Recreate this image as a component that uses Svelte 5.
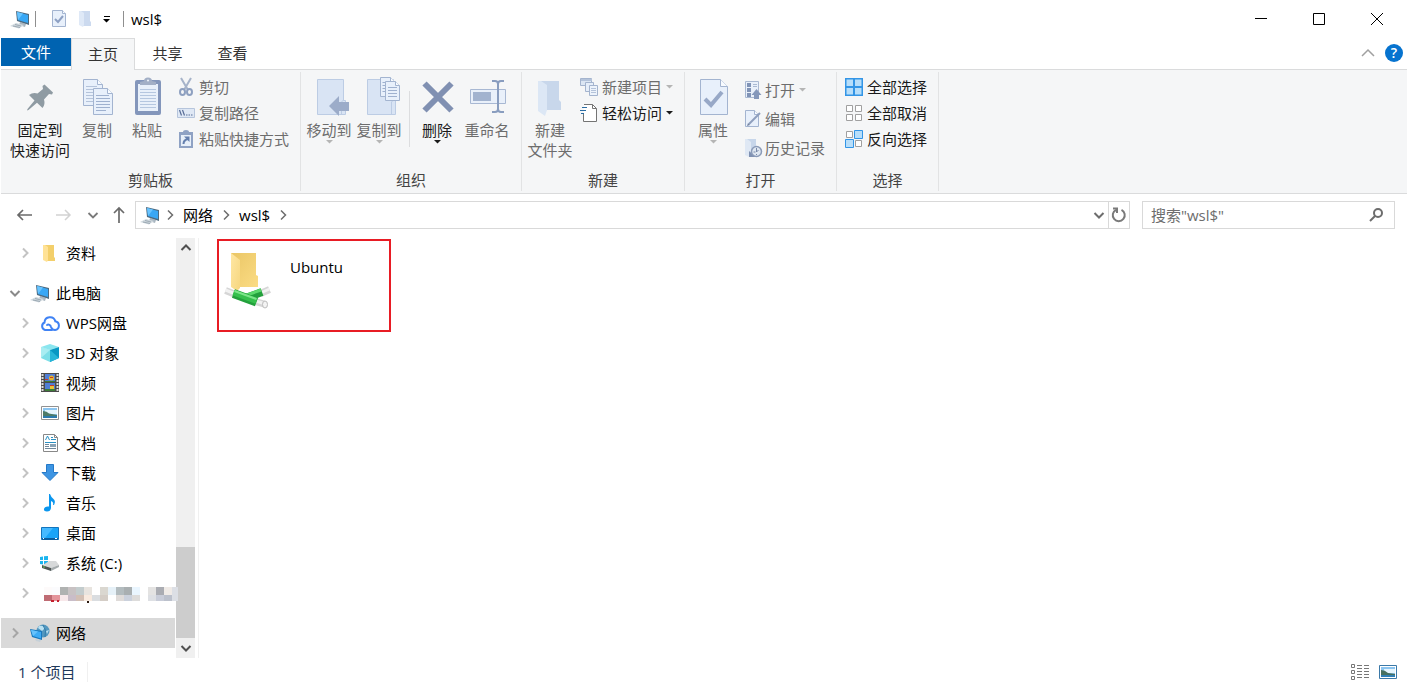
<script lang="ts">
	type BigItem = { icon: string; lines: string[]; off?: boolean; arrow?: boolean; wide?: boolean; divider?: boolean };
	type SmallItem = { icon: string; label: string; off?: boolean; arrow?: boolean };
	type Group = { title: string; big: BigItem[]; small: SmallItem[]; loose?: boolean };

	const tabs = ['主页', '共享', '查看'];
	let activeTab = $state('主页');
	let query = $state('');
	let selected = $state('网络');

	const groups: Group[] = [
		{
			title: '剪贴板',
			big: [
				{ icon: 'pin', lines: ['固定到', '快速访问'], wide: true },
				{ icon: 'copy', lines: ['复制'], off: true },
				{ icon: 'paste', lines: ['粘贴'], off: true }
			],
			small: [
				{ icon: 'cut', label: '剪切', off: true },
				{ icon: 'path', label: '复制路径', off: true },
				{ icon: 'shortcut', label: '粘贴快捷方式', off: true }
			]
		},
		{
			title: '组织',
			big: [
				{ icon: 'moveto', lines: ['移动到'], off: true, arrow: true },
				{ icon: 'copyto', lines: ['复制到'], off: true, arrow: true },
				{ icon: 'delete', lines: ['删除'], arrow: true, divider: true },
				{ icon: 'rename', lines: ['重命名'], off: true }
			],
			small: []
		},
		{
			title: '新建',
			big: [{ icon: 'newfolder', lines: ['新建', '文件夹'], off: true }],
			small: [
				{ icon: 'newitem', label: '新建项目', off: true, arrow: true },
				{ icon: 'easy', label: '轻松访问', arrow: true }
			]
		},
		{
			title: '打开',
			big: [{ icon: 'props', lines: ['属性'], off: true, arrow: true }],
			small: [
				{ icon: 'open', label: '打开', off: true, arrow: true },
				{ icon: 'edit', label: '编辑', off: true },
				{ icon: 'history', label: '历史记录', off: true }
			],
			loose: true
		},
		{
			title: '选择',
			big: [],
			small: [
				{ icon: 'selall', label: '全部选择' },
				{ icon: 'selnone', label: '全部取消' },
				{ icon: 'selinv', label: '反向选择' }
			]
		}
	];

	const tree = [
		{ icon: 'folder', label: '资料', level: 2 },
		{ icon: 'pc', label: '此电脑', level: 1, open: true, space: true },
		{ icon: 'cloud', label: 'WPS网盘', level: 2 },
		{ icon: 'cube', label: '3D 对象', level: 2 },
		{ icon: 'video', label: '视频', level: 2 },
		{ icon: 'picture', label: '图片', level: 2 },
		{ icon: 'doc', label: '文档', level: 2 },
		{ icon: 'download', label: '下载', level: 2 },
		{ icon: 'music', label: '音乐', level: 2 },
		{ icon: 'desktop', label: '桌面', level: 2 },
		{ icon: 'drive', label: '系统 (C:)', level: 2 },
		{ icon: '', label: '', level: 2 },
		{ icon: 'network', label: '网络', level: 1, space: true }
	];

	// Masked drive name, two rows of 8px blocks
	const mosaic = [
		['#fdfafa', '#fbfbfd', '#b0b2b1', '#c8c2c3', '#c3cccd', '#e8e4df', '#fff', '#dad7d0', '#e6f1f8', '#b3bcbf', '#a9afb1', '#eaf6ff', '#fff', '#e4e3e2', '#aaacb2', '#f0ebe7', '#dcdfe5'],
		['#bf6b73', '#e4949b', '#f8e8ea', '#c9bdc8', '#d2bfb4', '#f8eadf', '#dadde0', '#d4cdc6', '#fff', '#dfdbd9', '#cbd1dc', '#dddcdb', '#fff', '#dee0e4', '#c8ccd8', '#bcc1cc', '#dcdfe5']
	];
</script>

{#snippet chevron(dir: string, color: string, thick: number)}
	<svg class="chev {dir}" width="12" height="12" viewBox="0 0 12 12" fill="none" stroke={color} stroke-width={thick} aria-hidden="true">
		<path d="M4 1.500 8.500 6 4 10.500" />
	</svg>
{/snippet}

{#snippet caret(color: string)}
	<svg class="caret" width="7" height="4" viewBox="0 0 7 4" aria-hidden="true"><path d="M0 0h7L3.500 3.500z" fill={color} /></svg>
{/snippet}

{#snippet page(x: number, y: number, w: number, h: number, fold: number)}
	<path d="M{x} {y}h{w - fold}l{fold} {fold}v{h - fold}h-{w}z" fill="#e8f0fb" stroke="#a3b4d0" />
	<path d="M{x + w - fold} {y}v{fold}h{fold}" fill="#f8fbff" stroke="#a3b4d0" />
{/snippet}

{#snippet bigIcon(name: string)}
	<svg width="40" height="38" viewBox="0 0 40 38" fill="none" aria-hidden="true">
		{#if name === 'pin'}
			<path fill="#8f9ba3" d="M24.500 6.500 33 14.500l-1 2-3-.5-5 5.500q1.500 5-1.500 8.500L17 24.800 8.500 32 7 32.500 7.500 31l7-8.500L9 17q4-3 8.500-1.500L23 11l-.5-3z" />
		{:else if name === 'copy'}
			{@render page(6.5, 1.5, 19, 26, 5)}
			<path stroke="#b4c3da" d="M9 8.500h11M9 11.500h7M9 14.500h7M9 17.500h7M9 20.500h7M9 23.500h7" />
			{@render page(16.5, 10.5, 19, 26, 5)}
			<path stroke="#9fb1cf" d="M19 17.500h13M19 20.500h14M19 23.500h14M19 26.500h14M19 29.500h14M19 32.500h10" />
		{:else if name === 'paste'}
			<rect x="8" y="2" width="26" height="35" rx="2" fill="#8396bb" />
			<path fill="#e8f0fa" d="M11 6h20v27H11z" />
			<path stroke="#b5c7e0" d="M13 11.500h16M13 14.500h16M13 17.500h16M13 20.500h16M13 23.500h16M13 26.500h16M13 29.500h16" />
			<path fill="#a2afc6" d="M13 7V4l4-1q0-3.500 4-3.500T25 3l4 1v3z" />
			<circle cx="21" cy="2.500" r="1" fill="#eef3fa" />
		{:else if name === 'moveto'}
			<path fill="#d9e4f4" stroke="#bccce4" d="M8.500 1.500h26v21h2v14h-28z" />
			<path stroke="#bccce4" d="M32.500 36V24l2-2" />
			<path fill="#9cacc9" d="m20 28 10-10v6h10v9H30v5z" />
		{:else if name === 'copyto'}
			<path fill="#d9e4f4" stroke="#bccce4" d="M8.500 1.500h26v21h2v14h-28z" />
			<path stroke="#bccce4" d="M32.500 36V24l2-2" />
			{@render page(21.500, -.5, 14, 19, 4)}
			<path stroke="#9fb1cf" d="M23.500 4.500h8M23.500 7.500h3M23.500 10.500h3M23.500 13.500h3" />
			{@render page(26.500, 3.500, 14, 19, 4)}
			<path stroke="#9fb1cf" d="M29 9.500h9M29 12.500h9M29 15.500h9M29 18.500h9" />
		{:else if name === 'delete'}
			<path stroke="#8090b2" stroke-width="6" d="m7.500 5.500 27 27m0-27-27 27" />
		{:else if name === 'rename'}
			<path fill="#e9f0fa" stroke="#a8b8d3" d="M3.500 11.500h35v14h-35z" />
			<path fill="#a2b3cf" d="M6 14h18v9H6z" />
			<path stroke="#899dbf" stroke-width="2" d="M25 3h3q3 0 3 3v25q0 3-3 3h-3m12-31h-3q-3 0-3 3v25q0 3 3 3h3" />
		{:else if name === 'newfolder'}
			<path fill="#c8d7eb" d="M11 3h18v19l2 2v8H11z" />
			<path fill="#dce7f5" d="M8 3h3l6 4v25l-2 6-7-5z" />
		{:else if name === 'props'}
			{@render page(7.500, 1.500, 27, 35, 7)}
			<path stroke="#97a8c7" stroke-width="4" d="m12 21 6 6 11-13" />
		{/if}
	</svg>
{/snippet}

{#snippet smallIcon(name: string)}
	<svg width="18" height="18" viewBox="0 0 18 18" fill="none" aria-hidden="true">
		{#if name === 'cut'}
			<path stroke="#a6b3c9" stroke-width="2" d="m4 0 7 12M14 0 7 12" />
			<ellipse cx="5.500" cy="14" rx="2.500" ry="3" stroke="#8ea0c0" stroke-width="2" />
			<ellipse cx="12.500" cy="14" rx="2.500" ry="3" stroke="#8ea0c0" stroke-width="2" />
		{:else if name === 'path'}
			<path fill="#dfe8f5" stroke="#b6c5dc" d="M.5 4.500h17v9H.5z" />
			<path stroke="#596e98" stroke-width="1.200" d="m2.500 6 2 5.500m1-5.500 2 5.500M9 11h1.500m1 0H13m1 0h1.500" />
		{:else if name === 'shortcut'}
			<path fill="#8fa2c4" d="M2 2h4q0-2 3-2t3 2h4v16H2z" />
			<path fill="#e7eff9" d="M4 5h10v11H4z" />
			<path stroke="#647fae" stroke-width="2" d="M6.500 14q0-4 4.500-5" />
			<path fill="#647fae" d="M7 6.500h5.500V12z" />
		{:else if name === 'newitem'}
			<path fill="#dce6f3" stroke="#a4b4ce" d="M.5.5h11v7H.5z" />
			<path fill="#b4c3da" d="M1 1h11v2H1z" />
			<path fill="#e6eef9" stroke="#a4b4ce" d="M5.500 4.500h8v9h-8z" />
			<path fill="#edf3fb" stroke="#a4b4ce" d="M9.500 7.500h8v10h-8z" />
			<path stroke="#b4c3da" d="M11 10.500h5m-5 2h5m-5 2h5" />
		{:else if name === 'easy'}
			<path fill="#fff" stroke="#747474" d="M4 .5h8.500l4 4v13H3.500V9" />
			<path stroke="#747474" d="M12.500.5v4h4" />
			<path stroke="#2b6ca3" d="M2 3.500h5M0 6.500h6M1 9.500h3" />
		{:else if name === 'open'}
			<path fill="#e9f0fa" stroke="#aab9d2" d="M2.500.5h13v16h-13z" />
			<path fill="#8093b6" d="M4 2h4v4H4zM4 7h4v4H4zM4 12h4v4H4z" />
			<path stroke="#aab9d2" d="M10 3.500h4m-4 2h4" />
			<path fill="#8598bb" d="m13.500 8 5 6H16v4h-5v-4H8.500z" />
		{:else if name === 'edit'}
			{@render page(2.500, .5, 13, 16, 4)}
			<path stroke="#8e9fbd" stroke-width="2" d="M6 14 17 3" />
			<path fill="#73829f" d="m4 16 1-3 2 2z" />
		{:else if name === 'history'}
			<path fill="#c7d6ea" d="M4 0h9v15H4z" />
			<path fill="#dfe8f4" d="M2 0h2l4 3v12l-2 3-4-2z" />
			<path fill="#7f91b2" d="M6 12v6h7z" />
			<circle cx="13.500" cy="12.500" r="5" fill="#dfe7f1" stroke="#8b9bb8" stroke-width="1.500" />
			<path stroke="#7889a9" d="M13.500 9v4l2-2m-5 2h2m1 2v1" />
		{:else if name === 'selall'}
			<path fill="#b7defa" stroke="#3395e6" stroke-width="1.500" d="M.750.750h16.500v16.500H.750z" />
			<path stroke="#3395e6" stroke-width="2" d="M9 0v18M0 9h18" />
		{:else if name === 'selnone'}
			<path fill="#fff" stroke="#a0a0a0" d="M1.500 1.500h6v6h-6zM10.500 1.500h6v6h-6zM1.500 10.500h6v6h-6zM10.500 10.500h6v6h-6z" />
		{:else if name === 'selinv'}
			<path fill="#fff" stroke="#a0a0a0" d="M1.500 1.500h6v6h-6zM10.500 10.500h6v6h-6z" />
			<path fill="#b7defa" stroke="#3395e6" d="M9.500.5h8v8h-8zM.5 9.500h8v8h-8z" />
		{/if}
	</svg>
{/snippet}

{#snippet treeIcon(name: string)}
	<svg width="20" height="20" viewBox="0 0 20 20" fill="none" aria-hidden="true">
		{#if name === 'folder'}
			<path fill="#f3cf6b" d="M5 2h9v12l1 1v3H5z" />
			<path fill="#ffe296" d="M3 2h2l3 2v13l-1 2-4-2z" />
		{:else if name === 'pc'}
			<path fill="#a9b6c0" d="m10 13 6 2-1 3-6-2z" />
			<path fill="#cfd8de" d="m0 17 6-3 8 2-5 3.500z" />
			<path stroke="#9daab4" d="m3 17 7 1.500M5 15.500l6 1.500" />
			<path fill="#4c6a80" d="m6 2 13 3v11L7 12z" />
			<path fill="#38a7f5" d="m7 3 11 3v8L8 11z" />
			<path fill="#68c4ff" d="m7 3 6 1.600L8 11z" />
		{:else if name === 'cloud'}
			<path stroke="#3f82f4" stroke-width="2" stroke-linecap="round" d="M12 17H5a4 4 0 0 1-.5-7.500 5.500 5.500 0 0 1 10.800-1.200A4.400 4.400 0 0 1 15 17q-3 0-4-3c-.5-2-2.500-3-4-2" />
		{:else if name === 'cube'}
			<path fill="#8be6ef" d="m1 4 9-3 9 3-9 3z" />
			<path fill="#7edfe8" d="m1 4 9 3v12l-9-4z" />
			<path fill="#a9edf2" d="m1 4 9 3-9 8z" />
			<path fill="#0898c3" d="m19 4-9 3v12l9-4z" />
			<path fill="#27b6d8" d="m10 7 9 8-9 4z" />
		{:else if name === 'video'}
			<path fill="#4b4b4b" d="M1 0h18v19H1z" />
			<path stroke="#ddd" stroke-width="2" stroke-dasharray="2 1" d="M2.500 1v18M17.500 1v18" />
			<path fill="#4f7fd6" d="M5 1h10v8H5zM5 10h10v8H5z" />
			<circle cx="11.500" cy="5" r="2.500" fill="#e8b72d" />
			<path fill="#c23a2c" d="M5 6h3v1H5zM10 4h3v1h-3zM10 12h4v1h-4z" />
			<path fill="#e9c534" d="M10 13h4v3h-4z" />
			<path fill="#3c7b37" d="M5 8h10v1H5zM5 16h10v2H5z" />
		{:else if name === 'picture'}
			<path fill="#fff" stroke="#929292" d="M1.500 3.500h17v13h-17z" />
			<path fill="#8cc5f0" d="M3 5h14v10H3z" />
			<path fill="#e4f4fd" d="M5 7h12v4H5z" />
			<path fill="#4d7a68" d="M3 8q4 0 6 2.500L17 12v1H3z" />
			<path fill="#2b79ad" d="M3 13h14v2H3z" />
		{:else if name === 'doc'}
			<path fill="#fff" stroke="#888" d="M3.500 1.500h11l3 3v14h-14z" />
			<path stroke="#888" d="M14.500 1.500v3h3" />
			<path stroke="#2a91c3" d="m5.500 7 2-4 2 4M11 4.500h2M11 6.500h5M5 9.500h11" />
			<path stroke="#70879a" d="M5 11.500h4M5 13.500h4M5 15.500h11" />
			<path fill="#8aa3b5" d="M10 11h6v3h-6z" />
		{:else if name === 'download'}
			<path fill="#3d95e3" stroke="#2579c8" d="M6.500 1.500h7v8h4.500L10 17.500l-8-8h4.500z" />
		{:else if name === 'music'}
			<path fill="#0b96ee" d="M9 1h1q1 3 3.500 5t.5 6h-1q1-3-2-4v7q-.5 3.500-4 3.500T4 16q.5-3 5-2.500z" />
		{:else if name === 'desktop'}
			<path fill="#19a4f8" stroke="#1274bd" d="M1.500 4.500h17v12h-17z" />
			<path fill="#45b9ff" d="M2 5h11L5 15H2z" />
			<path fill="#0a5c9e" d="M2 15h16v2H2z" />
			<path fill="#fff" d="M3 15h1v1H3zM15 15h2v1h-2z" />
		{:else if name === 'drive'}
			<path fill="#1cb5ef" d="m0 4 3-.5V7H0zM4 3.300 8 3v4H4zM0 8h3v3.500L0 11zM4 8h4v4l-4-.4z" />
			<path fill="#d7d9da" d="m3 12 6-4h7l3 4-8 3z" />
			<path fill="#4c5554" d="m2 12 9 3v3l-9-3z" />
			<path fill="#a5abad" d="m11 15 8-3v2l-8 4z" />
			<path fill="#63d05b" d="M3 13.500h2v1H3z" />
		{:else if name === 'network'}
			<circle cx="13" cy="8" r="6.500" fill="#5397bf" />
			<path fill="#b9e0f1" d="M9 3q4-1 6 2l-3 3-4-3zM16 8l3-1-2 4z" />
			<path stroke="#317ba8" d="M13 2q4 5 2 12" />
			<path fill="#c5d0d8" d="m5 16 6 1-1 2-4-1z" />
			<path fill="#1978bd" d="m0 6 12 2v9L2 14z" />
			<path fill="#3dabf5" d="m1 7 10 2v6.500L3 13z" />
			<path fill="#67c2fc" d="m1 7 7 1.400L3 13z" />
		{/if}
	</svg>
{/snippet}

<div class="window">
	<header class="titlebar">
		<div class="quick">
			{@render treeIcon('pc')}
			<span class="bar"></span>
			<button type="button" aria-label="属性" disabled>
				<svg width="16" height="18" viewBox="0 0 16 18" fill="none">
					{@render page(1.500, .5, 13, 16, 3)}
					<path stroke="#8da0c3" stroke-width="2" d="m4 9 3 3 5-6" />
				</svg>
			</button>
			<button type="button" aria-label="新建文件夹" disabled>
				<svg width="12" height="18" viewBox="0 0 12 18">
					<path fill="#ccdaef" d="M2 1h9v10l1 1v4H2z" />
					<path fill="#dfe9f7" d="M0 1h2l3 2v12l-1 2-4-2z" />
				</svg>
			</button>
			<button type="button" aria-label="自定义快速访问工具栏">
				<svg width="8" height="8" viewBox="0 0 8 8"><path d="M1 1h6v1H1zM0 4h7L3.500 7.500z" /></svg>
			</button>
			<span class="bar"></span>
		</div>
		<h1>wsl$</h1>
		<div class="controls">
			<button type="button" aria-label="最小化">
				<svg width="12" height="12" viewBox="0 0 12 12" stroke="#000"><path d="M0 5.500h12" /></svg>
			</button>
			<button type="button" aria-label="最大化">
				<svg width="12" height="12" viewBox="0 0 12 12" stroke="#000" fill="none"><path d="M.5.5h11v11H.5z" /></svg>
			</button>
			<button type="button" aria-label="关闭">
				<svg width="12" height="12" viewBox="0 0 12 12" stroke="#000"><path d="m0 0 12 12M12 0 0 12" /></svg>
			</button>
		</div>
	</header>

	<div class="tabs">
		<button type="button" class="file">文件</button>
		{#each tabs as tab}
			<button type="button" class="tab" class:active={tab === activeTab} onclick={() => (activeTab = tab)}>{tab}</button>
		{/each}
		<div class="tabs-end">
			<button type="button" aria-label="最小化功能区">
				<svg width="14" height="8" viewBox="0 0 14 8" fill="none" stroke="#a0a0a0" stroke-width="1.500"><path d="m1 7 6-6 6 6" /></svg>
			</button>
			<button type="button" class="help" aria-label="帮助">?</button>
		</div>
	</div>

	<div class="ribbon">
		{#each groups as group}
			<section class="group">
				<div class="items">
					{#each group.big as item}
						{#if item.divider}<span class="divider"></span>{/if}
						<button type="button" class="big" class:wide={item.wide} disabled={item.off}>
							{@render bigIcon(item.icon)}
							<span>
								{#each item.lines as line}<span class="line">{line}</span>{/each}
							</span>
							{#if item.arrow}{@render caret(item.off ? '#b5b5b5' : '#1a1a1a')}{/if}
						</button>
					{/each}
					{#if group.small.length}
						<div class="small-list" class:loose={group.loose}>
							{#each group.small as item}
								<button type="button" class="small" disabled={item.off}>
									{@render smallIcon(item.icon)}
									<span>{item.label}</span>
									{#if item.arrow}{@render caret(item.off ? '#b5b5b5' : '#1a1a1a')}{/if}
								</button>
							{/each}
						</div>
					{/if}
				</div>
				<h2>{group.title}</h2>
			</section>
		{/each}
	</div>

	<div class="navbar">
		<button type="button" class="nav" aria-label="返回">
			<svg width="16" height="12" viewBox="0 0 16 12" fill="none" stroke="#6a6a6a" stroke-width="1.700"><path d="M1 6h14M6 1 1 6l5 5" /></svg>
		</button>
		<button type="button" class="nav" aria-label="前进">
			<svg width="16" height="12" viewBox="0 0 16 12" fill="none" stroke="#d2d2d2" stroke-width="1.500"><path d="M1 6h14M10 1l5 5-5 5" /></svg>
		</button>
		<button type="button" class="nav recent" aria-label="最近浏览的位置">{@render chevron('down', '#7a7a7a', 1.8)}</button>
		<button type="button" class="nav up" aria-label="上移">
			<svg width="12" height="16" viewBox="0 0 12 16" fill="none" stroke="#6a6a6a" stroke-width="1.700"><path d="M6 1v15M1 6l5-5 5 5" /></svg>
		</button>
		<div class="address">
			{@render treeIcon('pc')}
			{@render chevron('right', '#6d6d6d', 1.5)}
			<button type="button">网络</button>
			{@render chevron('right', '#6d6d6d', 1.5)}
			<button type="button">wsl$</button>
			{@render chevron('right', '#6d6d6d', 1.5)}
			<button type="button" class="history" aria-label="以前的位置">{@render chevron('down', '#6d6d6d', 2)}</button>
			<button type="button" class="refresh" aria-label="刷新">
				<svg width="16" height="16" viewBox="0 0 16 16" fill="none" stroke="#7a7a7a" stroke-width="2"><path d="M10.500 2.800a6 6 0 1 1-5.500 0" /><path d="M2 1.500h4v4.500" /></svg>
			</button>
		</div>
		<label class="search">
			<input type="text" aria-label="搜索" placeholder={'搜索"wsl$"'} bind:value={query} />
			<svg width="14" height="14" viewBox="0 0 14 14" fill="none" stroke="#6d6d6d" stroke-width="2"><circle cx="9" cy="5" r="4" /><path d="M6 8 1 13" /></svg>
		</label>
	</div>

	<div class="body">
		<nav class="tree" aria-label="导航窗格">
			<ul>
				{#each tree as node}
					<li class:space={node.space}>
						<button
							type="button"
							class="row level-{node.level}"
							class:selected={node.label === selected}
							aria-label={node.label || '驱动器'}
							onclick={() => (selected = node.label)}
						>
							{@render chevron(node.open ? 'down' : 'right', node.open ? '#8a8a8a' : node.label === selected ? '#a6a6a6' : '#c3c3c3', 2)}
							{#if node.icon}
								{@render treeIcon(node.icon)}
								<span>{node.label}</span>
							{:else}
								<svg class="mosaic" width="140" height="16" viewBox="0 0 140 16" aria-hidden="true">
									{#each mosaic as colors, r}
										{#each colors as color, c}
											<rect x={4 + c * 8} y={2 + r * 8} width={c === 16 ? 6 : 8} height={r ? 6 : 8} fill={color} />
										{/each}
									{/each}
									<path fill="#c4202e" d="M11 15h3v2h-3zM17 15h2v2h-2z" />
									<path fill="#2b1a10" d="M47 16h2v2h-2z" />
								</svg>
							{/if}
						</button>
					</li>
				{/each}
			</ul>
			<div class="scrollbar" aria-hidden="true">
				<span class="step">{@render chevron('up', '#505050', 2)}</span>
				<span class="track"><span class="thumb"></span></span>
				<span class="step">{@render chevron('down', '#505050', 2)}</span>
			</div>
		</nav>

		<main>
			<button type="button" class="tile">
				<svg width="48" height="60" viewBox="0 0 48 60" fill="none" aria-hidden="true">
					<defs>
						<linearGradient id="back" x1="0" y1="0" x2="1" y2="1">
							<stop offset="0" stop-color="#eac666" />
							<stop offset="1" stop-color="#fbdc84" />
						</linearGradient>
						<linearGradient id="front" x1="0" y1="0" x2="1" y2="1">
							<stop offset="0" stop-color="#ffe7a3" />
							<stop offset="1" stop-color="#f6d67f" />
						</linearGradient>
					</defs>
					<path fill="url(#back)" d="M7 2h25v22l2 1v11H7z" />
					<path fill="url(#front)" d="M7 2l9 7v28l-3 3-6-4z" />
					<!-- grey cable ends, then the green T-joint over them -->
					<path stroke="#d6d6d6" stroke-width="7" d="m1.500 39.500 10 4M45.500 38.500l-9 4M30 50l10 3" />
					<path stroke="#f2f2f2" stroke-width="3" d="m1.500 39 10 4M45.500 38l-9 4M30 49.500l10 3" />
					<path stroke="#23a03c" stroke-width="8" d="m23 46.500 15-5.500" />
					<path stroke="#5bd86b" stroke-width="3" d="m23 44 14-5" />
					<path stroke="#23a03c" stroke-width="9" d="m9.500 42.500 23 8.500" />
					<path stroke="#35c04c" stroke-width="6" d="m9.500 41.500 23 8.500" />
					<path stroke="#7be588" stroke-width="2" d="m10.500 40 22 8" />
					<ellipse cx="41" cy="53.500" rx="2.500" ry="3.500" fill="#f4f4f4" stroke="#bcbcbc" />
				</svg>
				<span>Ubuntu</span>
			</button>
		</main>
	</div>

	<footer>
		<span class="count">1 个项目</span>
		<div class="views">
			<button type="button" aria-label="详细信息">
				<svg width="18" height="16" viewBox="0 0 18 16" fill="none" stroke="#777">
					<path d="M.5.5h3v3h-3zM.5 6.500h3v3h-3zM.5 12.500h3v3h-3z" />
					<path d="M6 1.500h5M13 1.500h5M6 4.500h5M13 4.500h5M6 7.500h5M13 7.500h5M6 10.500h5M13 10.500h5M6 13.500h5M13 13.500h5" />
				</svg>
			</button>
			<button type="button" aria-label="大图标">
				<svg width="18" height="14" viewBox="0 0 18 14" fill="none">
					<path fill="#fff" stroke="#3b79a8" d="M.5.5h17v13H.5z" />
					<path fill="#8cc5f0" d="M2 2h14v10H2z" />
					<path fill="#e4f4fd" d="M5 4h11v4H5z" />
					<path fill="#46705f" d="M2 5q4 0 7 3l7 1v1H2z" />
					<path fill="#2f7fb6" d="M2 10h14v2H2z" />
				</svg>
			</button>
		</div>
	</footer>
</div>

<style>
	:global(body) {
		margin: 0;
		background: #fff;
	}

	.window {
		display: flex;
		flex-direction: column;
		min-height: 100vh;
		box-sizing: border-box;
		padding: 0 1px;
		background: #fff;
		color: #000;
		font-family: 'Open Sans', 'Noto Sans CJK SC', sans-serif;
		font-size: 15px;
		line-height: 20px;
	}

	button {
		display: flex;
		align-items: center;
		justify-content: center;
		margin: 0;
		padding: 0;
		border: 0;
		background: none;
		color: inherit;
		font: inherit;
		white-space: nowrap;
	}

	svg {
		flex: none;
		overflow: visible;
	}

	h1,
	h2 {
		margin: 0;
		font-size: inherit;
		font-weight: 400;
	}

	.chev.down {
		transform: rotate(90deg);
	}

	.chev.up {
		transform: rotate(-90deg);
	}

	.titlebar {
		display: flex;
		align-items: center;
		height: 38px;
	}

	.quick {
		display: flex;
		align-items: center;
		gap: 12px;
		padding: 0 7px 0 9px;
	}

	.quick .bar {
		width: 1px;
		height: 16px;
		background: #8f8f8f;
	}

	.quick .bar:nth-child(2) {
		margin: 0 3px 0 -7px;
	}

	.controls {
		display: flex;
		margin-left: auto;
		padding-right: 1px;
	}

	.controls button {
		width: 58px;
		height: 38px;
	}

	.tabs {
		display: flex;
		height: 31px;
		border-bottom: 1px solid #dadbdc;
		color: #333;
	}

	.file {
		width: 70px;
		height: 28px;
		background: #0063b1;
		color: #fff;
	}

	.tab {
		width: 64px;
		height: 31px;
		padding-bottom: 2px;
		box-sizing: border-box;
	}

	.tab + .tab {
		width: 65px;
	}

	.tab.active {
		height: 32px;
		border: 1px solid #dadbdc;
		border-bottom: 0;
		background: #f5f6f7;
	}

	.tabs-end {
		display: flex;
		align-items: center;
		gap: 10px;
		margin-left: auto;
		padding: 0 4px 2px 0;
	}

	.help {
		width: 18px;
		height: 18px;
		border-radius: 50%;
		background: #0673cf;
		color: #fff;
		font-size: 14px;
		font-weight: 600;
	}

	.ribbon {
		display: flex;
		height: 123px;
		border-bottom: 1px solid #dadbdc;
		background: #f5f6f7;
		color: #1a1a1a;
	}

	.group {
		display: flex;
		flex-direction: column;
		justify-content: space-between;
		margin: 2px 0;
		padding-bottom: 1px;
		border-right: 1px solid #e2e3e4;
	}

	.group h2 {
		color: #444;
		text-align: center;
	}

	.items {
		display: flex;
		align-items: flex-start;
		padding: 0 9px 0 3px;
	}

	.big {
		flex-direction: column;
		width: 50px;
		padding-top: 6px;
	}

	.big.wide {
		width: 64px;
		margin-left: 4px;
	}

	.big svg:first-child {
		margin-bottom: 4px;
	}

	.line {
		display: block;
	}

	.divider {
		width: 1px;
		height: 56px;
		margin: 19px 2px 0 5px;
		background: #dcdddf;
	}

	button:disabled {
		color: #6d6d6d;
	}

	.small-list {
		padding: 2px 2px 0 5px;
	}

	.small-list.loose {
		padding-top: 3px;
	}

	.small {
		gap: 4px;
		height: 26px;
	}

	.loose .small {
		height: 29px;
	}

	.navbar {
		display: flex;
		align-items: center;
		padding: 7px 12px 9px 5px;
	}

	.nav {
		width: 38px;
		height: 28px;
	}

	.nav.recent {
		width: 22px;
	}

	.nav.up {
		width: 31px;
		padding-right: 2px;
	}

	.address,
	.search {
		display: flex;
		align-items: center;
		box-sizing: border-box;
		height: 28px;
		border: 1px solid #d9d9d9;
	}

	.address {
		flex: 1;
		gap: 7px;
		margin-right: 12px;
		padding-left: 4px;
	}

	.address svg:first-child {
		margin-right: -3px;
	}

	.address .history {
		margin-left: auto;
	}

	.address .history svg {
		margin: 0;
	}

	.address .refresh {
		width: 21px;
		height: 26px;
		margin-left: -4px;
		border-left: 1px solid #d9d9d9;
	}

	.address .refresh svg {
		margin: 0;
	}

	.search {
		flex: 0 1 253px;
		padding: 0 11px 0 8px;
	}

	.search input {
		flex: 1;
		min-width: 0;
		padding: 0;
		border: 0;
		outline: 0;
		background: none;
		font: inherit;
	}

	.search input::placeholder {
		color: #6d6d6d;
		opacity: 1;
	}

	.body {
		display: flex;
		flex: 1;
	}

	.tree {
		display: flex;
		width: 197px;
		border-right: 1px solid #f0f0f0;
	}

	.tree ul {
		flex: 1;
		margin: 0;
		padding: 0 0 10px;
		list-style: none;
	}

	.tree .space {
		margin-top: 10px;
	}

	.row {
		justify-content: flex-start;
		width: 174px;
		height: 30px;
		padding-left: 8px;
	}

	.row.level-2 {
		padding-left: 18px;
	}

	.row.selected {
		background: #d9d9d9;
	}

	.row svg:nth-child(2) {
		margin: 0 6px 0 9px;
	}

	.row .mosaic {
		position: relative;
		z-index: 1;
	}

	.scrollbar {
		display: flex;
		flex-direction: column;
		width: 19px;
		margin-right: 3px;
		background: #f0f0f0;
	}

	.step {
		display: flex;
		align-items: center;
		justify-content: center;
		height: 20px;
	}

	.track {
		display: flex;
		flex: 1;
		flex-direction: column;
		justify-content: flex-end;
	}

	.thumb {
		height: 24%;
		background: #cdcdcd;
	}

	main {
		flex: 1;
		padding: 1px 18px;
	}

	.tile {
		align-items: flex-start;
		justify-content: flex-start;
		gap: 18px;
		box-sizing: border-box;
		width: 174px;
		height: 93px;
		padding: 10px 5px;
		border: 2px solid #e81c24;
	}

	.tile span {
		padding-top: 6px;
	}

	footer {
		display: flex;
		align-items: center;
		justify-content: space-between;
		height: 28px;
		padding: 0 10px 2px 17px;
		color: #1e395b;
	}

	.count {
		padding-right: 12px;
		border-right: 1px solid #f0f0f0;
	}

	.views {
		display: flex;
		gap: 10px;
	}
</style>
